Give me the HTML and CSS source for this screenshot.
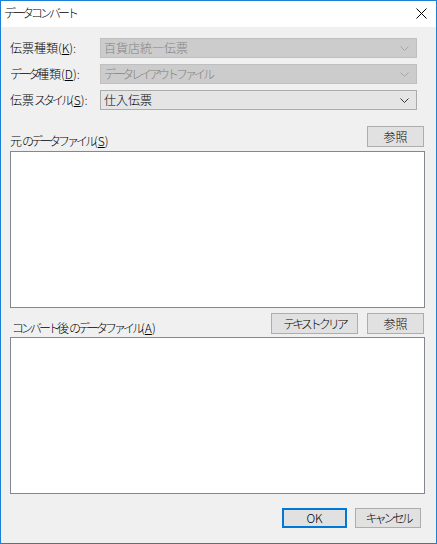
FILE: index.html
```html
<!DOCTYPE html>
<html lang="ja">
<head>
<meta charset="utf-8">
<title>データコンバート</title>
<link rel="stylesheet" href="styles.css">
</head>
<body>
<div class="window">
  <div class="titlebar">
    <span class="title"><span class="k">データコンバート</span></span>
    <span class="close">
      <svg width="11" height="11" viewBox="0 0 11 11"><path d="M0.5 0.5 L10.5 10.5 M10.5 0.5 L0.5 10.5" stroke="#000" stroke-width="1" fill="none"/></svg>
    </span>
  </div>
  <div class="client">
    <div class="form">
      <label class="lbl">伝票種類(<u>K</u>):</label>
      <div class="combo disabled"><span>百貨店統一伝票</span><svg class="chev" width="9" height="5" viewBox="0 0 9 5"><path d="M0.5 0.5 L4.5 4.5 L8.5 0.5" stroke="currentColor" fill="none"/></svg></div>
      <label class="lbl"><span class="k">データ</span>種類(<u>D</u>):</label>
      <div class="combo disabled"><span><span class="k">データレイアウトファイル</span></span><svg class="chev" width="9" height="5" viewBox="0 0 9 5"><path d="M0.5 0.5 L4.5 4.5 L8.5 0.5" stroke="currentColor" fill="none"/></svg></div>
      <label class="lbl">伝票<span class="k">スタイル</span>(<u>S</u>):</label>
      <div class="combo"><span>仕入伝票</span><svg class="chev" width="9" height="5" viewBox="0 0 9 5"><path d="M0.5 0.5 L4.5 4.5 L8.5 0.5" stroke="currentColor" fill="none"/></svg></div>
    </div>

    <div class="head head1">
      <span class="sect">元<span class="k">のデータファイル</span>(<u>S</u>)</span>
      <button class="btn ref">参照</button>
    </div>
    <div class="textbox"></div>

    <div class="head head2">
      <span class="sect sect2"><span class="k">コンバート</span>後<span class="k">のデータファイル</span>(<u>A</u>)</span>
      <div class="btns">
        <button class="btn clear"><span class="k">テキストクリア</span></button>
        <button class="btn ref">参照</button>
      </div>
    </div>
    <div class="textbox"></div>

    <div class="footer">
      <button class="btn ok">OK</button>
      <button class="btn cancel"><span class="k">キャンセル</span></button>
    </div>
  </div>
</div>
</body>
</html>
```

FILE: styles.css
```css
* { box-sizing: border-box; }
html, body { margin: 0; padding: 0; }
body {
  font-family: "Noto Sans CJK JP", "Noto Sans", sans-serif;
  font-size: 12px;
  font-weight: 300;
  color: #000;
  background: #fff;
}
.k { letter-spacing: -3px; }
.window {
  width: 437px;
  height: 544px;
  border: 1px solid #1c80d6;
  background: #f0f0f0;
  display: flex;
  flex-direction: column;
}
.titlebar {
  height: 26px;
  background: #fff;
  display: flex;
  align-items: center;
  justify-content: space-between;
  padding: 0 9px 0 3px;
}
.title { font-size: 12px; line-height: 1; margin-top: -2px; }
.close { display: flex; width: 11px; height: 11px; margin-top: -1px; }
.client {
  flex: 1;
  padding: 0 11px 0 9px;
  display: flex;
  flex-direction: column;
}
.form {
  margin-top: 11px;
  display: grid;
  grid-template-columns: 90px 317px;
  grid-auto-rows: 20px;
  row-gap: 6px;
  align-items: center;
}
.lbl { line-height: 20px; white-space: nowrap; }
.combo {
  height: 20px;
  border: 1px solid #acacac;
  background: #e5e5e5;
  display: flex;
  align-items: center;
  justify-content: space-between;
  padding: 0 7px 0 3px;
  color: #000;
}
.combo span { line-height: 1; }
.combo .chev { color: #333; }
.combo.disabled {
  background: #cccccc;
  border-color: #bfbfbf;
  color: #838383;
}
.combo.disabled .chev { color: #a6a6a6; }
.head {
  display: flex;
  justify-content: space-between;
  align-items: flex-end;
  padding-right: 1px;
}
.head1 { margin-top: 16px; }
.head2 { margin-top: 5px; }
.sect { line-height: 14px; margin-bottom: -1px; }
.sect2 { margin-left: 2px; margin-bottom: -1px; }
.btns { display: flex; gap: 9px; }
.btn {
  font-family: inherit;
  font-size: 12px;
  font-weight: inherit;
  color: #000;
  background: #e1e1e1;
  border: 1px solid #adadad;
  border-radius: 0;
  padding: 0;
  margin: 0;
  height: 21px;
  line-height: 1;
}
.ref { width: 57px; }
.clear { width: 87px; }
.textbox {
  margin-top: 4px;
  height: 157px;
  background: #fff;
  border: 1px solid #828790;
}
.head2 + .textbox { margin-top: 3px; }
.footer {
  margin-top: 14px;
  display: flex;
  justify-content: flex-end;
  gap: 8px;
  padding-right: 4px;
}
.ok, .cancel { width: 65px; height: 20px; }
.ok { border: 2px solid #0078d7; }
.cancel { width: 66px; }
```
